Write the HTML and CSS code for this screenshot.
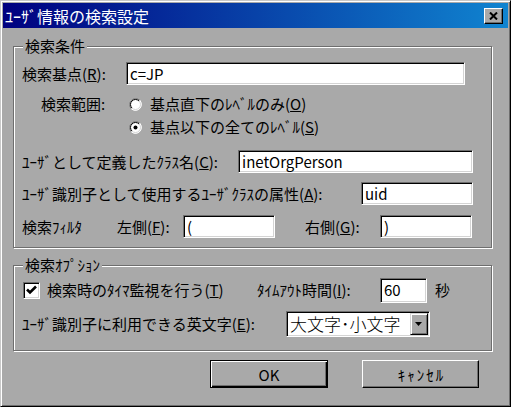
FILE: index.html
```html
<!DOCTYPE html>
<html lang="ja">
<head>
<meta charset="utf-8">
<title>ユーザ情報の検索設定</title>
<link rel="stylesheet" href="styles.css">
</head>
<body>
<div class="window">
  <div class="titlebar">
    <span class="title">ﾕｰｻﾞ情報の検索設定</span>
    <button class="close" aria-label="閉じる">
      <svg width="9" height="8" viewBox="0 0 9 8"><path d="M1 0.5 L8 7.5 M8 0.5 L1 7.5" stroke="#000" stroke-width="2" fill="none"/></svg>
    </button>
  </div>
  <div class="content">
    <div class="group g1">
      <span class="legend">検索条件</span>
      <div class="row h23 mt15">
        <span class="lbl w-base">検索基点(<u>R</u>):</span>
        <div class="field w-fbase">c=JP</div>
      </div>
      <div class="row h20 mt9">
        <span class="lbl w-scope">検索範囲:</span>
        <span class="radio">
          <svg width="15" height="15" viewBox="0 0 15 15">
            <circle cx="7.5" cy="7.5" r="6" fill="#fff"/>
            <path d="M3.26 11.74 A6 6 0 0 1 11.74 3.26" stroke="#6e6e6e" stroke-width="1" fill="none"/>
            <path d="M11.74 3.26 A6 6 0 0 1 3.26 11.74" stroke="#fff" stroke-width="1" fill="none"/>
            <path d="M3.96 11.04 A5 5 0 0 1 11.04 3.96" stroke="#000" stroke-width="1" fill="none"/>
            <path d="M11.04 3.96 A5 5 0 0 1 3.96 11.04" stroke="#d4d4d4" stroke-width="1" fill="none"/>
          </svg>
        </span>
        <span class="opt">基点直下のﾚﾍﾞﾙのみ(<u>O</u>)</span>
      </div>
      <div class="row h20 mt3">
        <span class="lbl w-scope"></span>
        <span class="radio">
          <svg width="15" height="15" viewBox="0 0 15 15">
            <circle cx="7.5" cy="7.5" r="6" fill="#fff"/>
            <path d="M3.26 11.74 A6 6 0 0 1 11.74 3.26" stroke="#6e6e6e" stroke-width="1" fill="none"/>
            <path d="M11.74 3.26 A6 6 0 0 1 3.26 11.74" stroke="#fff" stroke-width="1" fill="none"/>
            <path d="M3.96 11.04 A5 5 0 0 1 11.04 3.96" stroke="#000" stroke-width="1" fill="none"/>
            <path d="M11.04 3.96 A5 5 0 0 1 3.96 11.04" stroke="#d4d4d4" stroke-width="1" fill="none"/>
            <circle cx="7.5" cy="7.5" r="2" fill="#000"/>
          </svg>
        </span>
        <span class="opt">基点以下の全てのﾚﾍﾞﾙ(<u>S</u>)</span>
      </div>
      <div class="row h23 mt13">
        <span class="lbl w-class">ﾕｰｻﾞとして定義したｸﾗｽ名(<u>C</u>):</span>
        <div class="field w-fclass">inetOrgPerson</div>
      </div>
      <div class="row h23 mt9">
        <span class="lbl w-attr">ﾕｰｻﾞ識別子として使用するﾕｰｻﾞｸﾗｽの属性(<u>A</u>):</span>
        <div class="field w-fattr">uid</div>
      </div>
      <div class="row h23 mt10">
        <span class="lbl w-filter">検索ﾌｨﾙﾀ</span>
        <span class="lbl w-left">左側(<u>F</u>):</span>
        <div class="field w-ffilter">(</div>
        <span class="lbl w-right">右側(<u>G</u>):</span>
        <div class="field w-ffilter">)</div>
      </div>
    </div>

    <div class="group g2">
      <span class="legend">検索ｵﾌﾟｼｮﾝ</span>
      <div class="row h24 mt12">
        <span class="check">
          <svg width="11" height="10" viewBox="0 0 11 10"><path d="M1 4.5 L4 7.5 L10 1.5" stroke="#000" stroke-width="2.6" fill="none"/></svg>
        </span>
        <span class="lbl w-timer">検索時のﾀｲﾏ監視を行う(<u>T</u>)</span>
        <span class="lbl w-timeout">ﾀｲﾑｱｳﾄ時間(<u>I</u>):</span>
        <div class="field w-fsec">60</div>
        <span class="sec">秒</span>
      </div>
      <div class="row h26 mt9">
        <span class="lbl w-case">ﾕｰｻﾞ識別子に利用できる英文字(<u>E</u>):</span>
        <div class="select">
          <span class="sel-text">大文字･小文字</span>
          <span class="drop">
            <svg width="8" height="4" viewBox="0 0 8 4"><path d="M0 0 H7 L3.5 4 Z" fill="#000"/></svg>
          </span>
        </div>
      </div>
    </div>

    <div class="buttons">
      <button class="btn default">OK</button>
      <button class="btn wide">ｷｬﾝｾﾙ</button>
    </div>
  </div>
</div>
</body>
</html>
```

FILE: styles.css
```css
* { box-sizing: border-box; }
html, body { margin: 0; padding: 0; }
body {
  width: 511px;
  height: 407px;
  overflow: hidden;
  background: #a9a9a9;
  font-family: "Noto Sans CJK JP", "Noto Sans", sans-serif;
  font-size: 15px;
  color: #000;
}
u { text-decoration: underline; text-underline-offset: 1px; }

.window {
  width: 511px;
  height: 407px;
  background: #a9a9a9;
  border: 1px solid;
  border-color: #c8c8c8 #000 #000 #c8c8c8;
  box-shadow: inset 1px 1px #fff, inset -1px -1px #6e6e6e;
  padding: 2px;
  display: flex;
  flex-direction: column;
}

.titlebar {
  height: 25px;
  background: linear-gradient(to right, #000080, #1084d0);
  display: flex;
  align-items: center;
  justify-content: space-between;
  padding: 0 5px 0 2px;
}
.title {
  color: #fff;
  font-size: 16px;
  font-weight: normal;
  line-height: 18px;
}
.close {
  width: 19px;
  height: 16px;
  padding: 0;
  margin: 0;
  background: #a9a9a9;
  border: 1px solid;
  border-color: #fff #000 #000 #fff;
  box-shadow: inset -1px -1px #6e6e6e;
  display: flex;
  align-items: center;
  justify-content: center;
}

.content {
  padding: 18px 0 0 10px;
  display: flex;
  flex-direction: column;
}

.group {
  position: relative;
  width: 479px;
  border: 1px solid #6e6e6e;
  box-shadow: inset 1px 1px #fff, 1px 1px #fff;
  padding: 0 0 0 8px;
  display: flex;
  flex-direction: column;
}
.g1 { padding-bottom: 9px; }
.g2 { margin-top: 17px; padding-bottom: 13px; }

.legend {
  position: absolute;
  top: -10px;
  left: 9px;
  padding: 0 2px;
  line-height: 18px;
  background: #a9a9a9;
}

.row { display: flex; align-items: center; white-space: nowrap; }
.h20 { height: 20px; }
.h23 { height: 23px; }
.h24 { height: 24px; }
.h26 { height: 26px; }
.mt3 { margin-top: 3px; }
.mt9 { margin-top: 9px; }
.mt10 { margin-top: 10px; }
.mt12 { margin-top: 12px; }
.mt13 { margin-top: 13px; }
.mt15 { margin-top: 15px; }

.lbl { flex: none; line-height: 18px; }
.w-base { width: 104px; }
.w-scope { width: 106px; padding-left: 19px; }
.w-class { width: 216px; }
.w-attr { width: 339px; }
.w-filter { width: 95px; }
.w-left { width: 66px; }
.w-right { width: 105px; padding-left: 30px; }
.w-timer { width: 210px; margin-left: 7px; }
.w-timeout { width: 123px; }
.w-case { width: 264px; }

.field {
  flex: none;
  height: 100%;
  background: #fff;
  border: 1px solid;
  border-color: #6e6e6e #fff #fff #6e6e6e;
  box-shadow: inset 1px 1px #000, inset -1px -1px #d4d4d4;
  padding: 0 3px;
  display: flex;
  align-items: center;
  font-size: 15px;
  line-height: 18px;
}
.w-fbase { width: 339px; }
.w-fclass { width: 235px; }
.w-fattr { width: 112px; }
.w-ffilter { width: 92px; }
.w-fsec { width: 47px; height: 25px; }
.sec { margin-left: 8px; line-height: 18px; }

.radio { flex: none; width: 15px; height: 15px; display: flex; }
.opt { margin-left: 7px; line-height: 18px; }

.check {
  flex: none;
  width: 17px;
  height: 17px;
  margin-left: 1px;
  background: #fff;
  border: 1px solid;
  border-color: #6e6e6e #fff #fff #6e6e6e;
  box-shadow: inset 1px 1px #000, inset -1px -1px #d4d4d4;
  display: flex;
  align-items: center;
  justify-content: center;
}

.select {
  flex: none;
  width: 144px;
  height: 26px;
  background: #fff;
  border: 1px solid;
  border-color: #6e6e6e #fff #fff #6e6e6e;
  box-shadow: inset 1px 1px #000, inset -1px -1px #d4d4d4;
  padding: 1px;
  display: flex;
  align-items: center;
}
.sel-text {
  padding-left: 2px;
  font-size: 17px;
  line-height: 20px;
  font-weight: 300;
}
.drop {
  margin-left: auto;
  width: 18px;
  height: 22px;
  background: #a9a9a9;
  border: 1px solid;
  border-color: #d4d4d4 #000 #000 #d4d4d4;
  box-shadow: inset 1px 1px #fff, inset -1px -1px #6e6e6e;
  display: flex;
  align-items: center;
  justify-content: center;
}

.buttons {
  display: flex;
  gap: 34px;
  margin-top: 9px;
  padding-left: 197px;
}
.btn {
  width: 117px;
  height: 28px;
  margin: 0;
  padding: 0;
  font-family: "Noto Sans CJK JP", "Noto Sans", sans-serif;
  font-size: 15px;
  color: #000;
  background: #a9a9a9;
  border: 1px solid;
  border-color: #fff #000 #000 #fff;
  box-shadow: inset -1px -1px #6e6e6e;
}
.btn.wide { letter-spacing: 2px; padding-left: 2px; }
.btn.default {
  width: 118px;
  border-color: #000;
  box-shadow: inset 1px 1px #fff, inset -1px -1px #000, inset -2px -2px #6e6e6e;
}
```
